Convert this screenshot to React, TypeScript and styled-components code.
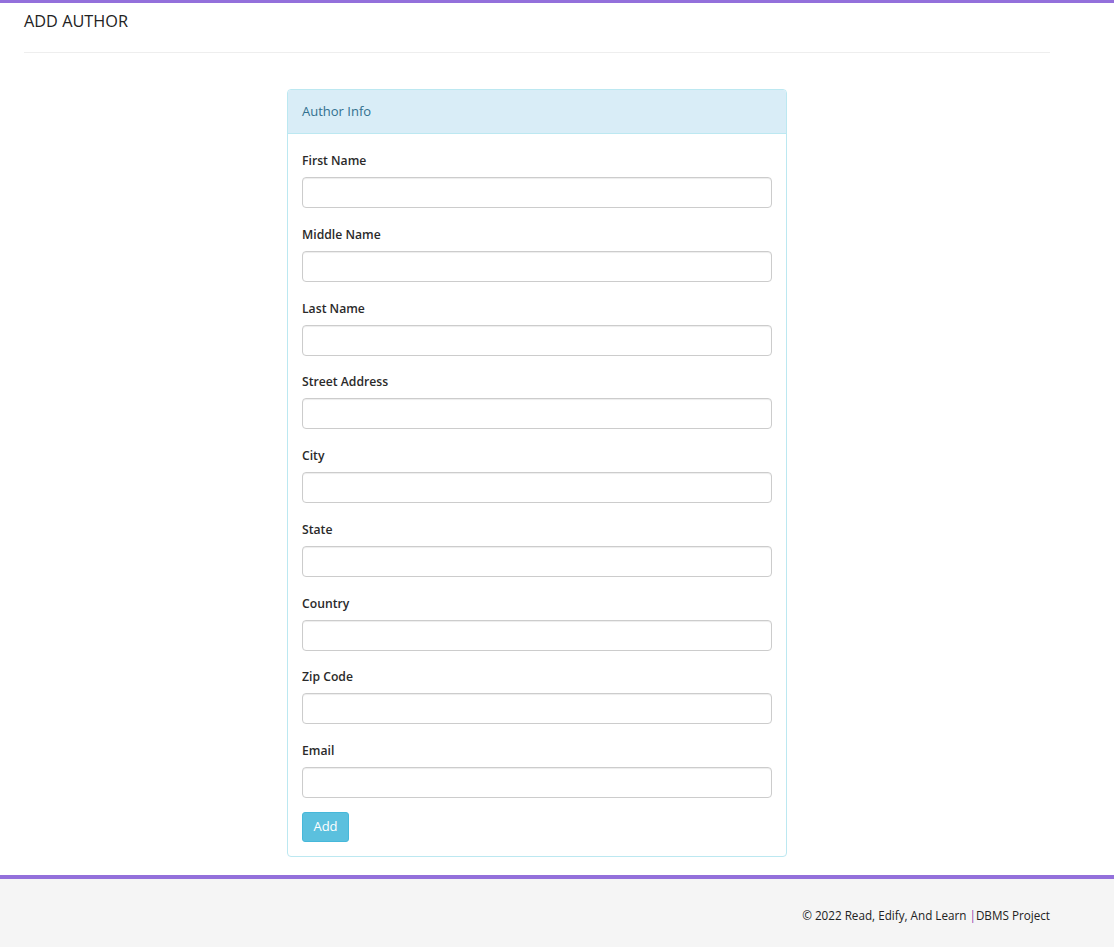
import React from "react";
import styled, { createGlobalStyle } from "styled-components";

const Global = createGlobalStyle`
  html, body { margin: 0; padding: 0; background: #fff; }
  body { font-family: "Open Sans", "Liberation Sans", sans-serif; color: #333; font-size: 13px; }
  * { box-sizing: border-box; }
`;

const Page = styled.div`
  border-top: 3px solid #9370db;
`;

const Container = styled.div`
  width: 1026px;
  margin-left: 24px;
`;

const Title = styled.h1`
  margin: 0;
  padding-top: 8px;
  font-size: 16.3px;
  font-weight: 500;
  line-height: 20px;
  color: #222;
`;

const Rule = styled.hr`
  border: 0;
  border-top: 1px solid #eee;
  margin: 21px 0 36px;
`;

const Panel = styled.div`
  width: 500px;
  margin: 0 auto;
  border: 1px solid #bce8f1;
  border-radius: 4px;
  background: #fff;
`;

const PanelHeading = styled.div`
  height: 44px;
  padding: 0 14px 2px;
  display: flex;
  align-items: center;
  background: #d9edf7;
  border-bottom: 1px solid #bce8f1;
  border-radius: 3px 3px 0 0;
  color: #31708f;
  font-size: 13px;
`;

const PanelBody = styled.form`
  padding: 18px 14px 14px;
  display: flex;
  flex-direction: column;
`;

const Group = styled.div`
  display: flex;
  flex-direction: column;
  margin-bottom: 17.75px;
  &:last-of-type { margin-bottom: 14px; }
`;

const Label = styled.label`
  font-size: 12.2px;
  font-weight: 600;
  line-height: 18px;
  margin-bottom: 7px;
  color: #2a2a2a;
`;

const Input = styled.input`
  height: 31px;
  width: 100%;
  border: 1px solid #ccc;
  border-radius: 4px;
  font: inherit;
  padding: 4px 10px;
  box-shadow: inset 0 1px 1px rgba(0,0,0,0.075);
`;

const Button = styled.button`
  align-self: flex-start;
  height: 30px;
  width: 47px;
  padding: 0 0 2px;
  background: #5bc0de;
  border: 1px solid #46b8da;
  border-radius: 3px;
  color: #fff;
  font-family: inherit;
  font-size: 13px;
`;

const Footer = styled.footer`
  margin-top: 18px;
  border-top: 4px solid #9370db;
  background: #f5f5f5;
  height: 72px;
`;

const FooterInner = styled.div`
  width: 1026px;
  margin-left: 24px;
  height: 68px;
  display: flex;
  justify-content: flex-end;
  align-items: center;
  padding-top: 4px;
  font-size: 11.7px;
  color: #222;
`;

const Pipe = styled.span`
  color: #8e44ad;
`;

const fields = [
  "First Name",
  "Middle Name",
  "Last Name",
  "Street Address",
  "City",
  "State",
  "Country",
  "Zip Code",
  "Email",
];

export default function App() {
  return (
    <>
      <Global />
      <Page>
        <Container>
          <Title>ADD AUTHOR</Title>
          <Rule />
          <Panel>
            <PanelHeading>Author Info</PanelHeading>
            <PanelBody onSubmit={(e) => e.preventDefault()}>
              {fields.map((f) => (
                <Group key={f}>
                  <Label>{f}</Label>
                  <Input type={f === "Email" ? "email" : "text"} />
                </Group>
              ))}
              <Button type="submit">Add</Button>
            </PanelBody>
          </Panel>
        </Container>
        <Footer>
          <FooterInner>
            © 2022 Read, Edify, And Learn&nbsp;<Pipe>|</Pipe>DBMS Project
          </FooterInner>
        </Footer>
      </Page>
    </>
  );
}
